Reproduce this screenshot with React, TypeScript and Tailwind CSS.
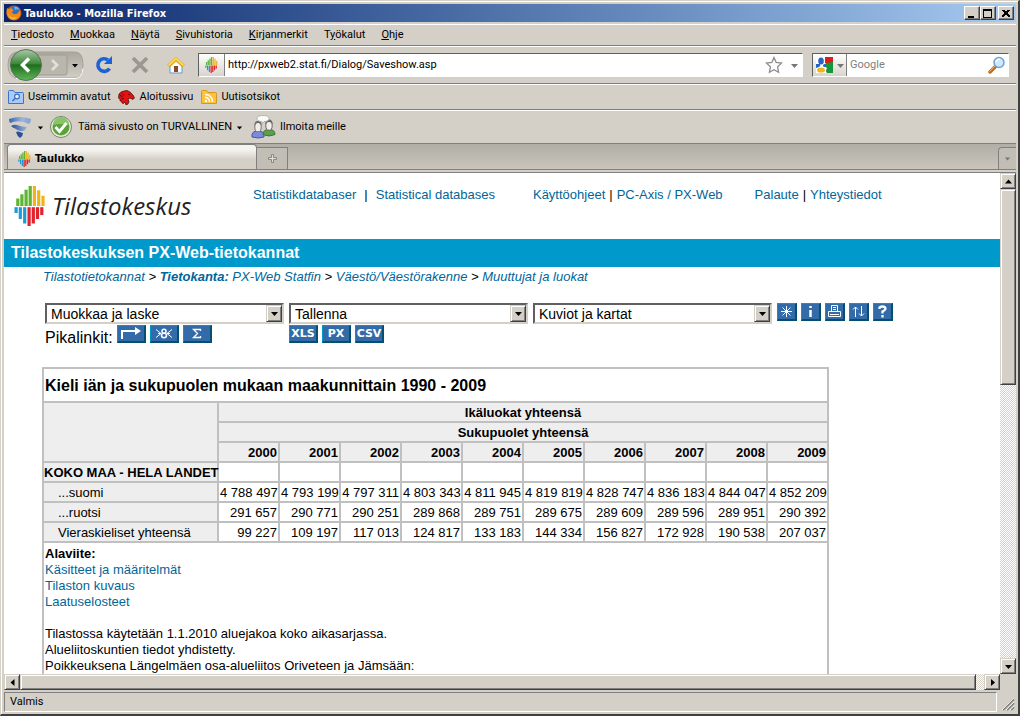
import React from "react";

const LOGO_TOP = [
  { x: 1.7, y: 12.5 },
  { x: 5.8, y: 8.3 },
  { x: 10, y: 3.7 },
  { x: 14.1, y: 0 },
  { x: 18.3, y: 0 },
  { x: 22.6, y: 4.3 },
  { x: 26.9, y: 9.7 },
];
const LOGO_BOTTOM = [
  { x: 0, y: 27 },
  { x: 4.2, y: 33 },
  { x: 8.6, y: 37.5 },
  { x: 13, y: 40 },
  { x: 17.2, y: 37.5 },
  { x: 21.4, y: 33 },
  { x: 25.7, y: 29 },
];

function StatLogo({ className }: { className: string }) {
  return (
    <svg viewBox="0 0 31 40" className={className} aria-hidden="true">
      {LOGO_TOP.map((b, i) => (
        <rect key={b.x} x={b.x} y={b.y} width="3.2" height={20 - b.y} fill={i < 4 ? "#5db531" : "#f2b317"} />
      ))}
      {LOGO_BOTTOM.map((b, i) => (
        <rect key={b.x} x={b.x} y="21.2" width="3.2" height={b.y - 21.2} fill={i < 3 ? "#1f9bd3" : "#e1232d"} />
      ))}
    </svg>
  );
}

function Triangle({ dir, className }: { dir: "up" | "down" | "left" | "right"; className?: string }) {
  const d = {
    up: "M0 5.5h7L3.5 1.5z",
    down: "M0 2h7L3.5 6z",
    left: "M5.5 0v7L1.5 3.5z",
    right: "M2 0v7L6 3.5z",
  }[dir];
  return (
    <svg width="7" height="7" viewBox="0 0 7 7" className={className} aria-hidden="true">
      <path d={d} fill="currentColor" />
    </svg>
  );
}

const RAISED =
  "border border-t-[#d4d0c8] border-l-[#d4d0c8] border-r-[#404040] border-b-[#404040] bg-[#d4d0c8] shadow-[inset_1px_1px_0_#fff,inset_-1px_-1px_0_#808080]";

function ScrollButton({ dir }: { dir: "up" | "down" | "left" | "right" }) {
  return (
    <button aria-label={"Vieritä " + dir} className={"flex h-4 w-4 shrink-0 items-center justify-center " + RAISED}>
      <Triangle dir={dir} />
    </button>
  );
}

function TitleButton({ label, children }: { label: string; children: React.ReactNode }) {
  return (
    <button
      aria-label={label}
      className="flex h-3.5 w-4 items-center justify-center border border-t-white border-l-white border-r-[#404040] border-b-[#404040] bg-[#d4d0c8] shadow-[inset_-1px_-1px_0_#808080]"
    >
      <svg width="10" height="9" viewBox="0 0 10 9" aria-hidden="true" shapeRendering="crispEdges" fill="none" stroke="#000">
        {children}
      </svg>
    </button>
  );
}

function FirefoxIcon() {
  return (
    <svg width="16" height="16" viewBox="0 0 16 16" aria-hidden="true">
      <circle cx="8" cy="8" r="7.5" fill="#d9560b" />
      <circle cx="8.5" cy="6.5" r="5.4" fill="#2f6fc4" />
      <path d="M8 2c3-1 5 1 5 3-2-1-3-1-4 0z" fill="#6fb0ea" />
      <path d="M1 3c1 1 1.500 1 2.500 1C5 2.500 6 3 6 4l2 1.500-2 1c0 2 2 3 4 2.500 2-.5 3-2 3-4 2 2 2 5 0 7.500C10 16 4 16 2 12 0 9 .500 6 1 3z" fill="#f08a18" />
      <path d="M2 8c1 4 5 6 9 4-2 3-8 2.500-9-4z" fill="#fbd04a" />
    </svg>
  );
}

function TitleBar() {
  return (
    <header className="flex h-[18px] items-center bg-linear-to-r from-[#0a246a] to-[#a6caf0] pr-0.5 pl-0.5 text-white">
      <FirefoxIcon />
      <h1 className="flex-1 pt-px pl-0.5 font-['DejaVu_Sans_Condensed','DejaVu_Sans',sans-serif] font-bold whitespace-nowrap">
        Taulukko - Mozilla Firefox
      </h1>
      <TitleButton label="Pienennä">
        <path d="M1 7h6M1 8h6" />
      </TitleButton>
      <TitleButton label="Suurenna">
        <path d="M.5 .5h8v8h-8zM0 1.500h9" />
      </TitleButton>
      <span className="w-0.5" />
      <TitleButton label="Sulje">
        <path d="M1.500 1l7 7M8.500 1l-7 7M2.500 1l6 6M7.500 1l-6 6" />
      </TitleButton>
    </header>
  );
}

const MENUS = [
  ["", "T", "iedosto"],
  ["", "M", "uokkaa"],
  ["", "N", "äytä"],
  ["", "S", "ivuhistoria"],
  ["", "K", "irjanmerkit"],
  ["T", "y", "ökalut"],
  ["", "O", "hje"],
];

function MenuBar() {
  return (
    <nav className="mt-0.5 flex h-[22px] items-center gap-4 border-t border-white border-b border-b-[#808080] pl-[7px]">
      {MENUS.map(([a, u, b]) => (
        <button key={u + b} className="whitespace-nowrap">
          {a}
          <u>{u}</u>
          {b}
        </button>
      ))}
    </nav>
  );
}

const SUNKEN = "border border-t-[#606060] border-l-[#606060] border-r-white border-b-white bg-white";

function NavigationBar() {
  return (
    <div className="flex h-[38px] items-center border-t border-white border-b border-b-[#808080] pr-[7px] pl-[3px]">
      <svg width="78" height="34" viewBox="0 0 78 34" role="img" aria-label="Takaisin ja eteenpäin">
        <defs>
          <linearGradient id="pill" x1="0" y1="0" x2="0" y2="1">
            <stop offset="0" stopColor="#aaa79f" />
            <stop offset="1" stopColor="#d2cec6" />
          </linearGradient>
          <linearGradient id="back" x1="0" y1="0" x2="0" y2="1">
            <stop offset="0" stopColor="#a9c8a5" />
            <stop offset="0.45" stopColor="#3f8a3c" />
            <stop offset="0.5" stopColor="#1c6f1c" />
            <stop offset="1" stopColor="#63b55b" />
          </linearGradient>
        </defs>
        <path d="M9 4h59q8 0 8 13t-8 13H9Q1 28 1 17T9 4z" fill="url(#pill)" stroke="#a5a299" />
        <path d="M9 30.500h59q7 0 8-10" fill="none" stroke="#fff" />
        <path d="M30 7h28q2 0 2 2v16q0 2-2 2H30z" fill="#b9b6ae" stroke="#9f9c95" />
        <circle cx="19" cy="17" r="15.500" fill="url(#back)" stroke="#58745a" />
        <path d="M22 10.500l-6.500 6.500 6.500 6.500" fill="none" stroke="#fff" strokeWidth="3.500" />
        <path d="M45 12l5 5-5 5" fill="none" stroke="#e2dfd8" strokeWidth="2.800" />
        <path d="M65 16h6l-3 3.500z" fill="#000" />
      </svg>
      <button aria-label="Päivitä" className="ml-2.5">
        <svg width="18" height="20" viewBox="0 0 18 20" aria-hidden="true">
          <path d="M14.500 13.500A6.300 6.300 0 1 1 13 5" fill="none" stroke="#1d63d6" strokeWidth="3.600" />
          <path d="M17 1v8H9z" fill="#1d63d6" />
        </svg>
      </button>
      <button aria-label="Pysäytä" className="ml-[18px]">
        <svg width="18" height="18" viewBox="0 0 18 18" aria-hidden="true">
          <path d="M2 2l14 14M16 2L2 16" stroke="#9a9891" strokeWidth="3.800" />
        </svg>
      </button>
      <button aria-label="Kotisivu" className="ml-[18px]">
        <svg width="18" height="18" viewBox="0 0 18 18" aria-hidden="true">
          <path d="M3 8v9h12V8L9 3z" fill="#f8fbff" stroke="#6b93cf" />
          <path d="M7 10h4v6H7z" fill="#8b4a1f" />
          <path d="M1.500 10L9 3l7.500 7" fill="none" stroke="#dc9b10" strokeWidth="3.600" strokeLinejoin="round" />
          <path d="M1.500 9.500L9 2.500l7.500 7" fill="none" stroke="#fbd850" strokeWidth="2.200" />
        </svg>
      </button>
      <div className={"ml-[13px] flex h-6 flex-1 items-center " + SUNKEN}>
        <span className="flex h-full w-[26px] items-center justify-center border-r border-[#808080] bg-linear-to-b from-white to-[#d9d5cd]">
          <StatLogo className="h-4 w-[13px]" />
        </span>
        <input aria-label="Osoite" defaultValue="http://pxweb2.stat.fi/Dialog/Saveshow.asp" className="min-w-0 flex-1 pl-[3px] outline-none" />
        <svg width="18" height="18" viewBox="0 0 18 18" aria-hidden="true">
          <path d="M9 1.500l2.200 5 5.300.600-3.900 3.700 1 5.500L9 13.700l-4.600 2.600 1-5.500L1.500 7.100l5.300-.6z" fill="#fff" stroke="#8d8d8d" strokeWidth="1.300" />
        </svg>
        <Triangle dir="down" className="mr-1 ml-2 text-[#777]" />
      </div>
      <div className={"ml-[9px] flex h-6 w-[197px] items-center " + SUNKEN}>
        <button aria-label="Hakukone" className="flex h-full w-[34px] items-center gap-1 border-r border-[#808080] bg-linear-to-b from-white to-[#d9d5cd] pl-[3px] text-[#777]">
          <svg width="17" height="16" viewBox="0 0 17 16" aria-hidden="true">
            <path d="M0 0h17v16H0z" fill="#fff" />
            <path d="M9 0h8v6H9z" fill="#e01b1b" />
            <path d="M17 5v11h-6q-2-2 0-5-4-2-1-5z" fill="#15963c" />
            <path d="M0 7h4q1 2-1 3L0 11z" fill="#2a62c4" />
            <ellipse cx="5" cy="4" rx="2.800" ry="3.500" fill="#2a62c4" />
            <circle cx="8.500" cy="8.500" r="1.500" fill="#2a62c4" />
            <ellipse cx="5" cy="13" rx="4" ry="2.600" fill="#f1b41a" />
          </svg>
          <Triangle dir="down" />
        </button>
        <input aria-label="Haku" placeholder="Google" className="w-0 min-w-0 flex-1 pl-[3px] outline-none placeholder:text-[#808080]" />
        <svg width="18" height="18" viewBox="0 0 18 18" className="mr-0.5" aria-hidden="true">
          <path d="M8 10l-6 6" stroke="#c46a1c" strokeWidth="3.500" strokeLinecap="round" />
          <path d="M7.500 9.500l-6 6" stroke="#f3b26a" strokeWidth="1" />
          <circle cx="11" cy="6.500" r="5" fill="#cfe8fb" stroke="#6aa3d8" strokeWidth="1.500" />
          <path d="M8 6a3 3 0 0 1 4-2.500" stroke="#fff" strokeWidth="1.500" fill="none" />
        </svg>
      </div>
    </div>
  );
}

function Bookmark({ label, children }: { label: string; children: React.ReactNode }) {
  return (
    <button className="flex items-center gap-1 whitespace-nowrap">
      {children}
      {label}
    </button>
  );
}

function BookmarksBar() {
  return (
    <div className="flex h-[26px] items-center gap-2 border-t border-white border-b border-b-[#808080] pl-1">
      <Bookmark label="Useimmin avatut">
        <svg width="16" height="14" viewBox="0 0 16 14" aria-hidden="true">
          <path d="M.5 1.500q0-1 1-1h4l1.500 2h7.500q1 0 1 1v10H.5z" fill="#a9c9f6" stroke="#3c73d0" />
          <circle cx="9" cy="6.500" r="2.400" fill="#e3eefc" stroke="#3f6fc0" strokeWidth="1.200" />
          <path d="M7 8.500L4.500 11" stroke="#3f6fc0" strokeWidth="1.600" />
        </svg>
      </Bookmark>
      <Bookmark label="Aloitussivu">
        <svg width="17" height="15" viewBox="0 0 17 15" aria-hidden="true">
          <path d="M1 4l2-2 3-1 3-.5 3 1.500 3 3 1.500 3-1.500 1.500-3-1.500-2 1 1 2.500-1 2.500-2 1-1-3-1.500 1.500-1.500-.5-.5-2-1.500 0L2 9.500.5 8z" fill="#e31313" stroke="#3a0606" strokeWidth="0.700" />
          <path d="M2 5.500l2.500 1M4.500 3.500l1.500 2M3.500 9l2.500-1M10 4l2 1" stroke="#3a0606" strokeWidth="0.800" />
        </svg>
      </Bookmark>
      <Bookmark label="Uutisotsikot">
        <svg width="16" height="14" viewBox="0 0 16 14" aria-hidden="true">
          <path d="M.5 1.500q0-1 1-1h4l1.500 2h7.500q1 0 1 1v10H.5z" fill="#fbc23b" stroke="#dc941a" />
          <circle cx="5" cy="11" r="1.200" fill="#fff" />
          <path d="M4 7.500a4 4 0 0 1 4.500 4.500M4 4.500a7 7 0 0 1 7.500 7.500" fill="none" stroke="#fff" strokeWidth="1.400" />
        </svg>
      </Bookmark>
    </div>
  );
}

function SafetyBar() {
  return (
    <div className="flex h-[33px] items-center border-t border-white pl-1">
      <svg width="25" height="24" viewBox="0 0 25 24" aria-hidden="true">
        <defs>
          <linearGradient id="bandTop">
            <stop offset="0" stopColor="#3565ae" />
            <stop offset="0.6" stopColor="#9db6da" />
            <stop offset="1" stopColor="#7d9fd0" />
          </linearGradient>
          <linearGradient id="bandMid">
            <stop offset="0" stopColor="#274f98" />
            <stop offset="1" stopColor="#9db6da" />
          </linearGradient>
        </defs>
        <path d="M1 4Q12 0 23 4q0 3-2 5Q11 4 2 8 1 6 1 4z" fill="url(#bandTop)" />
        <path d="M3 11q3-2 6-1 5 2 10 2-1 3-4 4-5 0-7-2-3-1-5-3z" fill="url(#bandMid)" />
        <path d="M8 17q2-1 4 0 2 1 3 1 0 3-3 5-3-2-4-6z" fill="#2b4f96" />
      </svg>
      <Triangle dir="down" className="ml-1 scale-75" />
      <svg width="22" height="22" viewBox="0 0 22 22" className="mx-1.5" aria-hidden="true">
        <circle cx="11" cy="11" r="10.500" fill="#e6efdc" stroke="#75826e" />
        <circle cx="11" cy="11" r="8.500" fill="#5aa338" />
        <path d="M3 9a8 8 0 0 1 16 0Q11 7 3 9z" fill="#8ac469" />
        <path d="M5.500 11l4 4.500 7-8.500" fill="none" stroke="#fff" strokeWidth="2.800" />
      </svg>
      <button className="flex items-center gap-1 whitespace-nowrap">
        Tämä sivusto on TURVALLINEN
        <Triangle dir="down" className="scale-75" />
      </button>
      <button className="ml-2 flex items-center gap-1 whitespace-nowrap">
        <svg width="25" height="24" viewBox="0 0 25 24" aria-hidden="true">
          <path d="M1 22q-1-6 6-6t6 6q-6 2-12 0z" fill="#7a8ade" stroke="#4a5899" />
          <path d="M12 19.500q0-5 6-5t6 5q-6 3-12 0z" fill="#5ba04d" stroke="#3c7433" />
          <ellipse cx="7" cy="12" rx="3.200" ry="4.800" fill="#f2efeb" stroke="#777" />
          <ellipse cx="18" cy="10.500" rx="3.200" ry="4.800" fill="#f2efeb" stroke="#666" />
          <path d="M3.500 11q-.5-5 3.500-5t3.500 5q-1-3-3.500-3t-3.500 3z" fill="#6c6a67" />
          <path d="M14.500 10q-.5-5.500 3.500-5.500t3.500 5.500q-1-3-3.500-3t-3.500 3z" fill="#6c6a67" />
          <path d="M12 .5q6 0 6 3t-5 3l-1.500 2-.5-2q-5 0-5-3t6-3z" fill="#fafafa" stroke="#aaa" strokeWidth="0.800" />
        </svg>
        Ilmoita meille
      </button>
    </div>
  );
}

function TabStrip() {
  return (
    <div className="flex h-[30px] shrink-0 flex-col border-t border-b border-[#808080]">
      <div className="flex h-[26px] items-end border-b border-[#808080] bg-linear-to-b from-[#b1aea6] to-[#c9c5bd] pl-[3px]">
        <button className="flex h-[25px] w-[250px] items-center gap-1 rounded-t border border-b-0 border-[#808080] bg-linear-to-b from-[#f4f3f0] from-20% to-[#d4d0c8] to-60% pt-1 pl-2.5 font-['DejaVu_Sans_Condensed','DejaVu_Sans',sans-serif] font-bold">
          <StatLogo className="h-4 w-[13px]" />
          Taulukko
        </button>
        <button aria-label="Uusi välilehti" className="flex h-[22px] w-[31px] items-center justify-center border border-b-0 border-l-0 border-[#808080] bg-[#c2beb6]">
          <svg width="9" height="9" viewBox="0 0 9 9" aria-hidden="true">
            <path d="M3.500 .5h2v3h3v2h-3v3h-2v-3h-3v-2h3z" fill="#ddd" stroke="#8a8780" />
          </svg>
        </button>
        <span className="flex-1" />
        <button aria-label="Luettele välilehdet" className="flex h-[22px] w-[18px] items-center justify-center rounded-tl border border-r-0 border-b-0 border-[#808080] bg-[#c2beb6] text-[#777]">
          <Triangle dir="down" className="scale-75" />
        </button>
      </div>
    </div>
  );
}

const LINK = "text-[#006699]";

function PageHeader() {
  return (
    <div className="flex h-[66px]">
      <div className="flex w-[249px] items-start gap-1.5 pt-[13px] pl-2.5">
        <StatLogo className="h-10 w-8" />
        <span className="pt-1 font-['Open_Sans','Noto_Sans',sans-serif] text-[24px] leading-8 text-[#222] italic">Tilastokeskus</span>
      </div>
      <nav className="flex items-start pt-3.5 leading-4 whitespace-nowrap">
        <a href="#sv" className={LINK}>Statistikdatabaser</a>
        <span className="mx-2">|</span>
        <a href="#en" className={LINK}>Statistical databases</a>
        <a href="#ohje" className={"ml-[38px] " + LINK}>Käyttöohjeet</a>
        <span className="mx-1">|</span>
        <a href="#px" className={LINK}>PC-Axis / PX-Web</a>
        <a href="#palaute" className={"ml-8 " + LINK}>Palaute</a>
        <span className="mx-1">|</span>
        <a href="#yhteys" className={LINK}>Yhteystiedot</a>
      </nav>
    </div>
  );
}

function DropDown({ label }: { label: string }) {
  return (
    <div className="relative h-[21px] w-[239px]">
      <select
        aria-label={label}
        className="h-full w-full appearance-none rounded-none border-2 border-t-[#606060] border-r-[#d4d0c8] border-b-[#d4d0c8] border-l-[#606060] bg-white pl-1 text-[14px] leading-4"
      >
        <option>{label}</option>
      </select>
      <span className={"pointer-events-none absolute inset-y-0.5 right-0.5 flex w-4 items-center justify-center " + RAISED}>
        <Triangle dir="down" />
      </span>
    </div>
  );
}

function BlueButton({ label, wide, children }: { label: string; wide?: boolean; children: React.ReactNode }) {
  return (
    <button
      aria-label={label}
      className={
        "flex h-[18px] items-center justify-center border-t border-r-2 border-b-2 border-l border-t-[#0099cc] border-r-[#055070] border-b-[#055070] border-l-[#0099cc] bg-[#336ba8] text-white " +
        (wide ? "w-[29px]" : "w-5")
      }
    >
      {children}
    </button>
  );
}

function Glyph({ w, children }: { w: number; children: React.ReactNode }) {
  return (
    <svg width={w} height="13" viewBox={"0 0 " + w + " 13"} fill="none" stroke="#fff" aria-hidden="true">
      {children}
    </svg>
  );
}

const CAPTION = "font-['DejaVu_Sans',sans-serif] text-[11px] leading-3 font-bold";

function Tools() {
  return (
    <div className="mt-[18px] flex gap-[5px] pl-[41px]">
      <div>
        <DropDown label="Muokkaa ja laske" />
        <div className="flex items-start gap-1 pt-px">
          <span className="pt-[3px] text-[16px] leading-5">Pikalinkit:</span>
          <BlueButton label="Käännä" wide>
            <Glyph w={22}>
              <path d="M2 12V4h13" strokeWidth="2" />
              <path d="M15 0v8l6-4z" fill="#fff" stroke="none" />
            </Glyph>
          </BlueButton>
          <BlueButton label="Poista" wide>
            <Glyph w={20}>
              <path d="M2 2.500l5 4-5 4M18 2.500l-5 4 5 4M4 6.500h3M13 6.500h3" />
              <ellipse cx="10" cy="4.200" rx="2" ry="2" strokeWidth="1.500" />
              <ellipse cx="10" cy="8.500" rx="2.500" ry="2.200" strokeWidth="1.500" />
            </Glyph>
          </BlueButton>
          <BlueButton label="Summa" wide>
            <Glyph w={12}>
              <path d="M9.500 4V2.500H2.500l4 4-4 4h7V9" strokeWidth="1.300" />
            </Glyph>
          </BlueButton>
        </div>
      </div>
      <div>
        <DropDown label="Tallenna" />
        <div className="flex gap-1 pt-px">
          {["XLS", "PX", "CSV"].map((t) => (
            <BlueButton key={t} label={t} wide>
              <span className={CAPTION}>{t}</span>
            </BlueButton>
          ))}
        </div>
      </div>
      <DropDown label="Kuviot ja kartat" />
      <div className="flex gap-1">
        <BlueButton label="Uusi">
          <Glyph w={13}>
            <path d="M6.500 1v11M1 6.500h11M2.500 2.500l8 8M10.500 2.500l-8 8" />
          </Glyph>
        </BlueButton>
        <BlueButton label="Tietoja">
          <Glyph w={5}>
            <path d="M2.500 1v2M2.500 5v7" strokeWidth="2.500" />
          </Glyph>
        </BlueButton>
        <BlueButton label="Tulosta">
          <Glyph w={13}>
            <path d="M3.500 6.500v-6h6v6M5 2.500h3M5 4.500h3M.5 11.500v-5h12v5zM2 9.500h9" />
          </Glyph>
        </BlueButton>
        <BlueButton label="Järjestä">
          <Glyph w={13}>
            <path d="M3.500 12V2M1 4.500L3.500 2 6 4.500M9.500 1v10M7 8.500L9.500 11 12 8.500" />
          </Glyph>
        </BlueButton>
        <BlueButton label="Ohje">
          <Glyph w={9}>
            <path d="M1.500 4V2.500Q2 1.500 4.500 1.500T7.500 3.500Q7.500 5 4.500 6.500V8.500M4.500 10v2.500" strokeWidth="2.300" />
          </Glyph>
        </BlueButton>
      </div>
    </div>
  );
}

const YEARS = [2000, 2001, 2002, 2003, 2004, 2005, 2006, 2007, 2008, 2009];
const ROWS = [
  { name: "...suomi", values: ["4 788 497", "4 793 199", "4 797 311", "4 803 343", "4 811 945", "4 819 819", "4 828 747", "4 836 183", "4 844 047", "4 852 209"] },
  { name: "...ruotsi", values: ["291 657", "290 771", "290 251", "289 868", "289 751", "289 675", "289 609", "289 596", "289 951", "290 392"] },
  { name: "Vieraskieliset yhteensä", values: ["99 227", "109 197", "117 013", "124 817", "133 183", "144 334", "156 827", "172 928", "190 538", "207 037"] },
];

const CELL = "h-5 border-2 border-[#c0c0c0] px-px pt-0.5 pb-0 whitespace-nowrap";

function DataTable() {
  return (
    <table className="mt-[19px] ml-[38px] w-[787px] table-fixed border-collapse leading-4">
      <colgroup>
        <col className="w-[175px]" />
        {YEARS.map((y) => (
          <col key={y} className="w-[61px]" />
        ))}
      </colgroup>
      <thead>
        <tr>
          <th colSpan={11} className="h-[34px] border-2 border-[#c0c0c0] px-px pt-0.5 pb-0 text-left text-[16px]">
            Kieli iän ja sukupuolen mukaan maakunnittain 1990 - 2009
          </th>
        </tr>
        <tr className="bg-[#eee]">
          <td rowSpan={3} className={CELL} />
          <th colSpan={10} className={CELL}>Ikäluokat yhteensä</th>
        </tr>
        <tr className="bg-[#eee]">
          <th colSpan={10} className={CELL}>Sukupuolet yhteensä</th>
        </tr>
        <tr className="bg-[#eee]">
          {YEARS.map((y) => (
            <th key={y} className={CELL + " text-right"}>{y}</th>
          ))}
        </tr>
      </thead>
      <tbody>
        <tr>
          <th className="h-5 border-2 border-[#c0c0c0] bg-[#eee] px-0 pt-0.5 pb-0 text-left whitespace-nowrap">KOKO MAA - HELA LANDET</th>
          {YEARS.map((y) => (
            <td key={y} className={CELL} />
          ))}
        </tr>
        {ROWS.map((r) => (
          <tr key={r.name}>
            <th className="h-5 border-2 border-[#c0c0c0] bg-[#eee] pt-0.5 pr-px pb-0 pl-3.5 text-left font-normal whitespace-nowrap">{r.name}</th>
            {r.values.map((v, i) => (
              <td key={YEARS[i]} className={CELL + " text-right"}>{v}</td>
            ))}
          </tr>
        ))}
      </tbody>
      <tfoot>
        <tr>
          <td colSpan={11} className="border-2 border-[#c0c0c0] px-px pt-[3px] pb-4 align-top">
            <p className="font-bold">Alaviite:</p>
            <p><a href="#kasitteet" className={LINK}>Käsitteet ja määritelmät</a></p>
            <p><a href="#kuvaus" className={LINK}>Tilaston kuvaus</a></p>
            <p><a href="#laatu" className={LINK}>Laatuselosteet</a></p>
            <p className="mt-4">Tilastossa käytetään 1.1.2010 aluejakoa koko aikasarjassa.</p>
            <p>Alueliitoskuntien tiedot yhdistetty.</p>
            <p>Poikkeuksena Längelmäen osa-alueliitos Oriveteen ja Jämsään:</p>
          </td>
        </tr>
      </tfoot>
    </table>
  );
}

function Page() {
  return (
    <main className="min-w-0 flex-1 overflow-hidden bg-white font-['Liberation_Sans',Arial,sans-serif] text-[13px]">
      <PageHeader />
      <h2 className="h-7 bg-[#0099cc] pl-[7px] text-[16px] leading-7 font-bold text-white">Tilastokeskuksen PX-Web-tietokannat</h2>
      <p className="mt-0.5 pl-[39px] leading-4 whitespace-nowrap italic">
        <a href="#db" className={LINK}>Tilastotietokannat</a> &gt;{" "}
        <a href="#statfin" className={LINK}><b>Tietokanta:</b> PX-Web Statfin</a> &gt;{" "}
        <a href="#vaesto" className={LINK}>Väestö/Väestörakenne</a> &gt;{" "}
        <a href="#muuttujat" className={LINK}>Muuttujat ja luokat</a>
      </p>
      <Tools />
      <DataTable />
    </main>
  );
}

const TRACK = "bg-[conic-gradient(#fff_25%,#d4d0c8_0_50%,#fff_0_75%,#d4d0c8_0)] bg-size-[2px_2px]";

export default function App() {
  return (
    <div className="flex h-screen flex-col border-t border-r-2 border-b-2 border-l border-t-[#d4d0c8] border-r-[#404040] border-b-[#404040] border-l-[#d4d0c8] bg-[#d4d0c8] pt-[3px] pr-0.5 pb-0.5 pl-[3px] font-[Roboto,'Liberation_Sans',sans-serif] text-[11px] leading-[14px] text-black shadow-[inset_1px_1px_0_#fff]">
      <TitleBar />
      <MenuBar />
      <NavigationBar />
      <BookmarksBar />
      <SafetyBar />
      <TabStrip />
      <div className="flex min-h-0 flex-1">
        <Page />
        <div className={"flex w-4 flex-col " + TRACK}>
          <ScrollButton dir="up" />
          <div className={"h-[196px] " + RAISED} />
          <span className="flex-1" />
          <ScrollButton dir="down" />
        </div>
      </div>
      <div className="flex pr-4">
        <div className={"flex flex-1 " + TRACK}>
          <ScrollButton dir="left" />
          <div className={"flex-1 " + RAISED} />
          <span className="w-2" />
          <ScrollButton dir="right" />
        </div>
      </div>
      <footer className="mt-0.5 flex h-5 items-center">
        <p className="flex h-full flex-1 items-center border border-t-[#808080] border-r-white border-b-white border-l-[#808080] pl-[5px]">Valmis</p>
        <svg width="19" height="18" viewBox="0 0 19 18" aria-hidden="true">
          <path d="M6 17L17 6M10 17l7-7M14 17l3-3" stroke="#808080" strokeWidth="1.800" />
          <path d="M5 17L17 5M9 17l8-8M13 17l4-4" stroke="#fff" strokeWidth="0.800" />
        </svg>
      </footer>
    </div>
  );
}
